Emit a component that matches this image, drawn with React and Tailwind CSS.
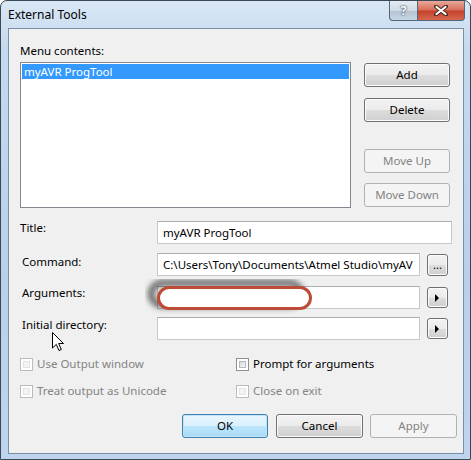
import clsx from 'clsx';

const Btn = ({ children, className = '', disabled, isDefault }) => (
  <div
    className={clsx(
      'flex items-center justify-center rounded-[3px] border text-[11.5px] leading-none',
      disabled
        ? 'border-[#adb2b5] bg-[#f4f4f4] text-[#838383]'
        : isDefault
          ? 'border-[#3c7fb1] bg-[linear-gradient(to_bottom,#eaf6fd_0%,#d9f0fc_50%,#bee6fd_51%,#a7d9f5_100%)] shadow-[inset_0_0_0_1px_#c4e5f6] text-black'
          : 'border-[#707070] bg-[linear-gradient(to_bottom,#f2f2f2_0%,#ebebeb_50%,#dddddd_51%,#cfcfcf_100%)] shadow-[inset_0_0_0_1px_#fcfcfc] text-black',
      className
    )}
  >
    {children}
  </div>
);

const Field = ({ children, className = '' }) => (
  <div className={clsx('h-[23px] border border-[#c5c9d0] border-t-[#abadb3] bg-white pl-[5px] text-[11.5px] leading-[21px] whitespace-nowrap overflow-hidden', className)}>
    {children}
  </div>
);

const Arrow = () => (
  <svg width="5" height="8" viewBox="0 0 5 8">
    <path d="M0 0 L4 4 L0 8 Z" fill="#000" />
  </svg>
);

const Check = ({ label, disabled }) => (
  <div className="flex h-[16px] items-center">
    <div className={clsx('h-[13px] w-[13px] border bg-white p-[2px]', disabled ? 'border-[#bcbcbc]' : 'border-[#8e8f8f]')}>
      <div className={clsx('h-full w-full border', disabled ? 'border-[#e3e3e3] bg-[#f4f4f4]' : 'border-[#b4b8be] bg-[linear-gradient(135deg,#d6d9de,#f8f8f8)]')} />
    </div>
    <span className={clsx('ml-[4px] text-[11.5px] leading-[16px]', disabled ? 'text-[#838383]' : 'text-black')}>{label}</span>
  </div>
);

export default function App() {
  return (
    <div className="h-[460px] w-[471px] overflow-hidden rounded-t-[7px] border border-[#3a4756] bg-[linear-gradient(to_bottom,#d9e7f5_0%,#c6daef_10%,#b8d0ea_60%,#bed5ed_100%)] font-['Noto_Sans',sans-serif] text-black">
      {/* title bar */}
      <div className="flex h-[27px] items-start">
        <div className="ml-[7px] mt-[6px] text-[12px] leading-[16px]">External Tools</div>
        <div className="ml-auto mr-[5px] flex">
          <div className="flex h-[20px] w-[29px] items-center justify-center rounded-bl-[4px] border border-t-0 border-[#53667a] bg-[linear-gradient(to_bottom,#e4ebf2_0%,#cfdbe7_50%,#b4c4d4_51%,#c7d6e4_100%)] text-[13px] font-bold leading-none text-white [text-shadow:0_0_2px_#2c3a48,0_0_1px_#2c3a48]">
            ?
          </div>
          <div className="flex h-[20px] w-[47px] items-center justify-center rounded-br-[4px] border border-l-0 border-t-0 border-[#53667a] bg-[linear-gradient(to_bottom,#e9a99a_0%,#d7705d_45%,#c4432d_55%,#d6684e_100%)]">
            <svg width="14" height="11" viewBox="0 0 14 11">
              <path d="M2 1.5 L12 9.5 M12 1.5 L2 9.5" stroke="#4a2a22" strokeWidth="4" strokeLinecap="round" />
              <path d="M2.5 2 L11.5 9 M11.5 2 L2.5 9" stroke="#fff" strokeWidth="2.2" strokeLinecap="round" />
            </svg>
          </div>
        </div>
      </div>

      {/* client area */}
      <div className="relative ml-[7px] h-[426px] w-[456px] border border-[#7a8fa5] bg-[#f0f0f0] pl-[11px] text-[11.5px]">
        <div className="mt-[14px] leading-[16px]">Menu contents:</div>

        <div className="mt-[3px] flex items-start">
          <div className="h-[146px] w-[331px] border border-[#828790] bg-white p-[1px]">
            <div className="h-[15px] bg-[#3399ff] pl-[2px] leading-[15px] text-white">myAVR ProgTool</div>
          </div>
          <div className="ml-[13px] mt-[1px] flex flex-col">
            <Btn className="h-[24px] w-[86px]">Add</Btn>
            <Btn className="mt-[11px] h-[24px] w-[86px]">Delete</Btn>
            <Btn disabled className="mt-[27px] h-[24px] w-[86px]">Move Up</Btn>
            <Btn disabled className="mt-[10px] h-[24px] w-[86px]">Move Down</Btn>
          </div>
        </div>

        <div className="mt-[13px] flex items-start">
          <div className="mt-[-1px] w-[137px] leading-[16px]">Title:</div>
          <Field className="w-[295px]">myAVR ProgTool</Field>
        </div>

        <div className="mt-[9px] flex items-start">
          <div className="mt-[1px] w-[137px] pl-[2px] leading-[16px]">Command:</div>
          <Field className="w-[263px]">C:\Users\Tony\Documents\Atmel Studio\myAV</Field>
          <Btn className="ml-[7px] mt-[1px] h-[22px] w-[21px] items-end pb-[5px]">...</Btn>
        </div>

        <div className="mt-[10px] flex items-start">
          <div className="mt-[-1px] w-[137px] pl-[2px] leading-[16px]">Arguments:</div>
          <Field className="w-[263px]" />
          <Btn className="ml-[7px] mt-[1px] h-[21px] w-[21px]"><Arrow /></Btn>
        </div>

        <div className="mt-[8px] flex items-start">
          <div className="w-[137px] pl-[2px] leading-[16px]">Initial directory:</div>
          <Field className="w-[263px]" />
          <Btn className="ml-[7px] mt-[1px] h-[21px] w-[21px]"><Arrow /></Btn>
        </div>

        <div className="mt-[16px] flex">
          <div className="w-[216px]"><Check disabled label="Use Output window" /></div>
          <Check label="Prompt for arguments" />
        </div>
        <div className="mt-[11px] flex">
          <div className="w-[216px]"><Check disabled label="Treat output as Unicode" /></div>
          <Check disabled label="Close on exit" />
        </div>

        <div className="mt-[15px] flex justify-end pr-[6px]">
          <Btn isDefault className="h-[24px] w-[86px]">OK</Btn>
          <Btn className="ml-[8px] h-[24px] w-[87px]">Cancel</Btn>
          <Btn disabled className="ml-[7px] h-[24px] w-[87px]">Apply</Btn>
        </div>

        {/* red annotation ellipse over the Arguments field */}
        <svg className="pointer-events-none absolute left-[136px] top-[250px]" width="184" height="40" viewBox="0 0 184 40">
          <defs>
            <filter id="blur" x="-20%" y="-60%" width="140%" height="220%">
              <feGaussianBlur stdDeviation="3" />
            </filter>
          </defs>
          <rect x="6" y="4" width="150" height="22" rx="11" fill="none" stroke="#000" strokeOpacity="0.75" strokeWidth="5" filter="url(#blur)" />
          <rect x="13.5" y="8.5" width="152" height="21" rx="10.5" fill="#fff" stroke="#bd4b36" strokeWidth="3" />
        </svg>

        {/* mouse cursor */}
        <svg className="pointer-events-none absolute left-[43px] top-[303px]" width="13" height="20" viewBox="0 0 13 20">
          <path d="M0.5 0.5 L0.5 16 L4.3 12.4 L7 18.5 L9.3 17.5 L6.7 11.5 L11.5 11.5 Z" fill="#fff" stroke="#000" strokeWidth="1" strokeLinejoin="miter" />
        </svg>
      </div>
    </div>
  );
}
